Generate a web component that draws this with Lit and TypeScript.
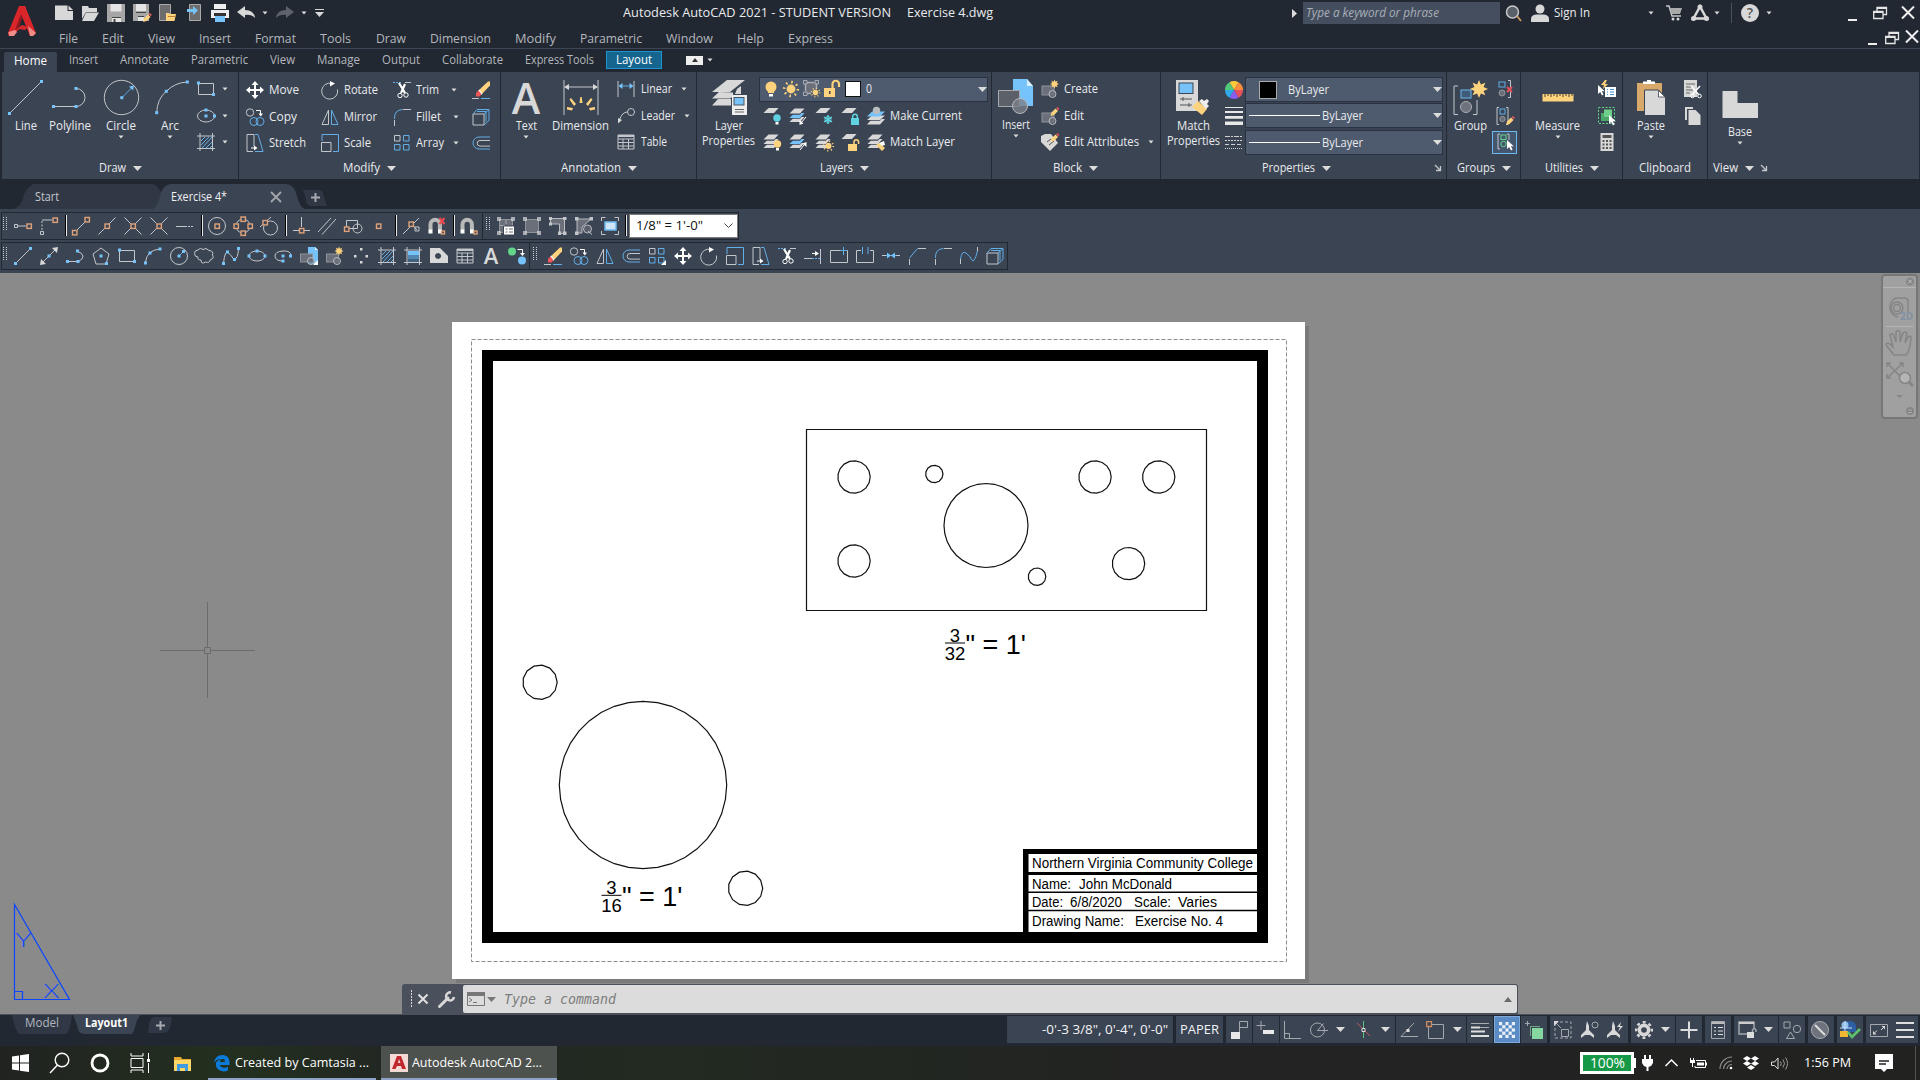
import { LitElement, html, svg, css, nothing } from "lit";
import { customElement, property } from "lit/decorators.js";

/** Text squeezed or stretched horizontally to a known advance width. */
@customElement("fit-text")
class FitText extends LitElement {
  @property({ type: Number }) w = 0;
  @property() label = "";
  static styles = css`
    :host { display: block; white-space: pre; line-height: 16px; }
    span { display: inline-block; transform-origin: 0 50%; }
  `;
  updated() {
    const s = this.renderRoot.querySelector("span") as HTMLElement;
    s.style.transform = "none";
    const n = s.getBoundingClientRect().width;
    if (n > 0) s.style.transform = `scaleX(${this.w / n})`;
    this.style.width = `${this.w}px`;
  }
  render() { return html`<span>${this.label}</span>`; }
}

type Cell = [number, number, unknown];

const sq = (x: number, y: number, s = 3) => svg`<rect class="bf" x=${x - s / 2} y=${y - s / 2} width=${s} height=${s} />`;
const osq = (x: number, y: number) => svg`<rect class="o" x=${x - 2} y=${y - 2} width="4.4" height="4.4" />`;
const sheet = (y: number, c = "gf") => svg`<path class=${c} d="M5.5 ${y}H15.5L11 ${y + 5}H.5Z" />`;
const stack = (mid = "gf") => svg`${sheet(10, "gf")}<path class="bg" d="M6 6H16L11 11.8H0Z" />${sheet(6, mid)}<path class="bg" d="M6 2H16L11 7.8H0Z" />${sheet(1.5)}`;
const pencil = (x: number, y: number) => svg`<path class="y" d="M${x} ${y + 8}l1-3.5 4-4 2.5 2.5-4 4z"/><path class="r" d="M${x + 5.6} ${y}l1.4-1 1.8 1.8-1 1.4z"/>`;
const cursor = (x: number, y: number) => svg`<path fill="#fff" d="M${x} ${y}v9l2.2-2 1.8 3.4 1.6-.8-1.7-3.3h2.9z"/>`;
const star = (cx: number, cy: number, r: number, n = 8) => {
  let p = "";
  for (let i = 0; i < n * 2; i++) {
    const a = (i * Math.PI) / n - Math.PI / 2, q = i % 2 ? r * 0.55 : r;
    p += `${(cx + q * Math.cos(a)).toFixed(2)},${(cy + q * Math.sin(a)).toFixed(2)} `;
  }
  return svg`<polygon class="y" points=${p} />`;
};
const sun = (cx: number, cy: number, r: number) => svg`<circle class="y" cx=${cx} cy=${cy} r=${r * 0.55} /><circle cx=${cx} cy=${cy} r=${r * 0.86} fill="none" stroke="#ffd37d" stroke-width=${r * 0.32} stroke-dasharray="${r * 0.2} ${r * 0.475}" />`;
const gear = svg`<circle cx="9" cy="9" r="4.6" fill="none" stroke="#d8d8d8" stroke-width="3.6"/><circle cx="9" cy="9" r="7.8" fill="none" stroke="#d8d8d8" stroke-width="2.4" stroke-dasharray="3 3.12" stroke-dashoffset="1.5"/>`;
const magnet = svg`<path d="M3.5 13V7.5a4.7 4.7 0 0 1 9.4 0V13" fill="none" stroke="#b9b9b9" stroke-width="4"/><path d="M1.5 12.5h4v4h-4zM11 12.5h4v4h-4z" fill="#fff"/>`;
const scissors = svg`<path class="b" stroke-dasharray="2 1" d="M0 1.5h8"/><path class="g" d="M12 1.5h6"/><path d="M6 2l6 10M12 3L8 12" stroke="#fff" stroke-width="2.2"/><circle cx="7" cy="14.5" r="2.2" class="w"/><circle cx="13" cy="14" r="2.2" class="w"/>`;
const cubeI = svg`<path class="g" d="M1 6h11v11H1z"/><path class="b" d="M1 6l4-4.500h12v11l-5 4.500M12 6l5-4.500M5 3.500h9v10"/>`;
const offsetI = svg`<path class="b" d="M18 3H7a6 6 0 0 0 0 12h11"/><path class="g" d="M18 6.500H8a2.800 2.800 0 0 0 0 5.600h10"/>`;
const eraser = svg`<path class="y" d="M6 10L16 .5h2v4L9 14z"/><path fill="#f2f2f2" d="M6 10l3 4 1.500-1.500-3-4z"/><path class="r" d="M4 12l2.500-2.500 3 3.700L7.500 15.500 4 15.500z"/><path class="g" d="M0 17.500h7"/><path class="b" d="M9 17.500h9"/>`;
const docI = (x: number, y: number, w: number, h: number, c = "gf") => svg`<path class=${c} d="M${x} ${y}h${w - 5}l5 5v${h - 5}h${-w}z"/>`;
const frame = svg`<path class="dg" d="M2.500 2.500h13v13h-13z"/><path class="gf" d="M0 0h4v4H0zM14 0h4v4h-4zM0 14h4v4H0zM14 14h4v4h-4z" opacity=".7"/>`;
const hatchI = (inner: unknown) => svg`${inner}<path class="g" d="M0 3h18M0 15.500h18M3 0v18M15.500 0v18"/>`;
const copyI = svg`<circle class="g" cx="4" cy="4.500" r="3.700"/><path class="w" d="M10 2.500h4.500v4"/><path fill="#fff" d="M12.500 5.500h4.500l-2.200 3z"/><circle class="b" cx="8" cy="13.500" r="4"/><circle class="b" cx="14" cy="13.500" r="4"/>`;
const blockI = svg`<rect class="dg" x="1" y="6" width="12" height="9"/><circle class="dg2" cx="11.500" cy="14" r="3.500"/>`;
const A_logo = svg`<path fill="#8e1a1f" d="M14.500 0l4 1L10 24 1 30 0 27z"/><path fill="#d9262b" d="M11 0h6l11 27-3 3h-3L13 8 7 24l7-5 6 2-3 3-6-1-6 7H1l-1-3z"/><path fill="#ef8d86" d="M7 24l2 2-3 4H1l-.500-4zM20 20l8 7-3 3h-3z"/>`;

const I: Record<string, unknown> = {
  line: svg`<path class="g" d="M1.500 33.500L33.500 1.500"/>${sq(1.5, 33.5)}${sq(33.5, 1.5)}`,
  polyline: svg`<path class="g" d="M2 26.500h22a9 9 0 0 0 0-18"/>${sq(1.500, 26.500)}${sq(24, 26.500)}${sq(24, 8.500)}`,
  circle: svg`<circle class="g" cx="18.500" cy="17.500" r="17.200"/><path class="b" d="M18.500 18L28.500 8"/><path class="bf" d="M31 5.500l-1 5-4-4z"/>${sq(18.800, 17.700)}`,
  arc: svg`<path class="g" d="M4.700 33Q5 19 14.300 11.300Q23 2.500 35.300 2"/>${sq(4.700, 32.700)}${sq(14.300, 11.300)}${sq(35.300, 2)}`,
  rect: svg`<path class="g" d="M1.500 3.500h15v11h-15z"/>${sq(1.500, 3)}${sq(16.500, 14.500)}`,
  ellipse: svg`<ellipse class="g" cx="9" cy="9" rx="8.500" ry="6"/>${sq(9, 3)}${sq(9, 9)}${sq(17.500, 9)}`,
  ellipse2: svg`<ellipse class="g" cx="9" cy="9" rx="8" ry="5"/>${sq(9, 4)}${sq(1, 9)}${sq(17, 9)}`,
  ellarc: svg`<path class="g" d="M8 14Q1 13.500 1 9T9 4t8 5"/>${sq(9, 9)}${sq(9, 14)}${sq(16.500, 9)}`,
  hatch: hatchI(svg`<path class="b" d="M4 8l4-4M4 12l8-8M5 15L15 4M9 15l6-6M13 15l2-2"/>`),
  gradient: hatchI(svg`<path class="bf" d="M4 4h11v4H4z"/><path fill="#5387b0" d="M4 8h11v4H4z"/><path fill="#42617e" d="M4 12h11v3H4z"/>`),
  move: svg`<path d="M9 2v14M2 9h14" stroke="#fff" stroke-width="2"/><path fill="#fff" d="M9 0l3.500 4h-7zM9 18l3.500-4h-7zM0 9l4-3.500v7zM18 9l-4-3.500v7z"/>`,
  rotate: svg`<path class="g" d="M11 2.500A8 8 0 1 0 16.500 8.500"/><path fill="#fff" d="M9 0l5 2.500-5 3z"/>`,
  trim: scissors, copy: copyI, eraser, cube: cubeI, offset: offsetI,
  mirror: svg`<path class="g" d="M7.500 2v14.500H1z"/><path class="b" d="M10.500 2v14.500H17z"/>`,
  fillet: svg`<path class="g" d="M10 1.500h8M1.500 12v6"/><path class="b" d="M1.500 11Q1 2 9.500 1.500"/>`,
  chamfer: svg`<path class="g" d="M10 1.500h8M1.500 12v6"/><path class="b" d="M1.500 11l8-9.500"/>`,
  stretch: svg`<path class="g" d="M7 17.500H1V.500h7v12"/><path class="b" d="M9 .5h3l5 17H9"/><path class="w" d="M5 14h4"/><path fill="#fff" d="M8 11.500l3.500 2.500-3.500 2.500z"/>`,
  scale: svg`<path class="b" d="M1 7V.500h16.500v17H12"/><path class="g" d="M.5 8.500h9.500v9H.500z"/>`,
  array: svg`<path class="g" d="M1.500 1.500h5.500v5.500H1.500z"/><path class="b" d="M10.500 1.500H16v5.500h-5.500zM1.500 10.500H7V16H1.500zM10.500 10.500H16V16h-5.500z"/>`,
  array2: svg`<path class="g" d="M1.500 1.500h5.500v5.500H1.500z"/><path class="b" d="M10.500 1.500H16v5.500h-5.500zM1.500 10.500H7V16H1.500zM10.500 10.500H16V16h-5.500z"/><path fill="#fff" d="M18 13v5h-5z"/>`,
  bigA: svg`<text x="18" y="33.500" text-anchor="middle" font-family="Open Sans" font-weight="600" font-size="43" fill="#d8d8d8">A</text>`,
  smA: svg`<text x="9" y="17" text-anchor="middle" font-family="Open Sans" font-weight="600" font-size="22" fill="#d8d8d8">A</text>`,
  dimension: svg`<path class="g" d="M1 0v35M35 0v35M3 7h30"/><path class="gf" d="M1 7l5-3v6zM35 7l-5-3v6z"/><g class="y"><path d="M16.500 23h3l-.800-6h-1.400zM13 24l-5-6-1.500 1.500L11 26zM23 24l5-6 1.500 1.500L25 26zM10 28l-6-1v2.500l5 1zM26 28l6-1v2.500l-5 1z"/></g>`,
  linear: svg`<path class="g" d="M1 1v16M17 1v16"/><path class="b" d="M3 6h12"/><path class="bf" d="M1.500 6l4-3v6zM16.500 6l-4-3v6z"/>`,
  leader: svg`<circle class="g" cx="14" cy="5" r="3.500"/><path class="g" d="M10.500 5Q5 5 2.500 13"/><path class="gf" d="M1 16.500V11l4 2z"/>`,
  table: svg`<path class="g" d="M1 2h16v14H1zM1 6h16M1 9.500h16M1 13h16M6 6v10M11.500 6v10"/><path class="g" stroke-width="2" d="M1 3h16"/>`,
  layers: svg`<path class="gf" d="M16 0h18L19 12H1z"/><path class="gf" d="M8 12L1 18.500h18l3-2v-4zM7 19l-6 6.500h19V19z"/><path class="gf" d="M26 9l4-3v8h-6z"/><rect x="21" y="15" width="15" height="20" fill="#eee"/><rect x="23" y="17.500" width="10" height="7.500" class="bf" stroke="#4a5260"/><path d="M24 29.500h9M24 32h9" stroke="#666"/>`,
  bulb: svg`<circle class="y" cx="9" cy="7" r="5.500"/><path class="y" d="M6 9h6v4H6z"/><path fill="#fff" d="M7 14h4v2.500H7z"/>`,
  sun: sun(9, 9, 8),
  vpfreeze: svg`<path fill="#6a6f7a" d="M2 2h12v11H2z"/><path fill="none" stroke="#a9adb3" stroke-width="1.500" d="M4 2.500h7M2.500 4v7M13.500 4v5M4 13.500h4"/><path fill="none" stroke="#a9adb3" d="M.500.500h3.500v3.500H.500zM12 .5h3.500v3.500H12zM.500 12h3.500v3.500H.500z"/>${sun(12.500, 12.500, 4.800)}`,
  unlock: svg`<path class="y" d="M1 8h11v9H1z"/><path fill="none" stroke="#ffd37d" stroke-width="2.200" d="M9.500 8V4a3 3 0 0 1 6.500 0v3"/><path fill="#3b4453" d="M6 11h1.500v3H6z"/>`,
  lyOff: svg`${sheet(1)}<circle cx="14" cy="11" r="3.700" fill="#5fd3e0"/><path fill="#fff" d="M12.500 15h3v2.500h-3z"/>`,
  lyIso: svg`${stack("bf")}<path class="w" d="M17 10l-5 6"/><path fill="#fff" d="M10.500 18v-5l4 3.500z"/>`,
  lyFrz: svg`${sheet(1)}<path stroke="#5fd3e0" stroke-width="1.500" d="M13 8v9M9 10.200l8 4.600M17 10.200l-8 4.600"/><circle cx="13" cy="12.500" r="3" fill="none" stroke="#5fd3e0"/>`,
  lyLock: svg`${sheet(1)}<path fill="#5fd3e0" d="M10 11h8v7h-8z"/><path fill="none" stroke="#5fd3e0" stroke-width="1.500" d="M11.700 11V9.500a2.300 2.300 0 0 1 4.600 0V11"/>`,
  lyCur: svg`<path class="gf" d="M5 12h13l-5 5.500H0z"/><path class="bg" d="M5 8h13l-5 5.800H0z"/><path class="gf" d="M5 8.500h13l-5 4.500H0z"/><path class="bf" d="M5 4.500h13l-5 5H0z"/><circle cx="9.500" cy="3.500" r="3.700" fill="#b9bcc0"/>`,
  lyOn: svg`${stack()}<circle class="y" cx="14.500" cy="11" r="3.700"/><path fill="#fff" d="M13 15h3v2.500h-3z"/>`,
  lyUniso: svg`${stack("bf")}<path class="w" d="M11 17l4-5"/><path fill="#fff" d="M17.500 9v5l-4-3.500z"/>`,
  lyThaw: svg`${stack()}${sun(13.500, 13, 5.500)}`,
  lyUnlock: svg`${sheet(1)}<path class="y" d="M7 11h9v7H7z"/><path fill="none" stroke="#ffd37d" stroke-width="1.500" d="M13 11V9a2.300 2.300 0 0 1 4.600 0v2"/>`,
  lyMatch: svg`${stack()}<path class="y" d="M9 12l3-2 6 5-3 3z"/><path fill="#fff" d="M12 10l5-2 1 4-3 1z"/>`,
  insert: svg`<path class="bf" d="M15 0h14l6 7v20H15z"/><path fill="#d8eeff" d="M29 0v7h6z"/><path fill="#5c6069" stroke="#a6a9ae" d="M.5 11.500h21v16H.500z"/><circle fill="#7c818a" fill-opacity=".8" stroke="#b5b8bd" cx="22" cy="27" r="7.500"/>`,
  create: svg`${blockI}${star(13.500, 4, 4.500)}`,
  edit: svg`${blockI}${pencil(9.500, 1)}`,
  attrs: svg`<path class="gf" d="M0 3l4-2h6l7 9-8 8L0 9z"/><path stroke="#555" d="M6 9l4-3M8 12l5-4" />${pencil(9.500, 1)}`,
  match: svg`<path class="gf" d="M1 0h22v31H1z"/><rect x="4" y="3" width="14" height="10.500" class="bf" stroke="#3b4453"/><path stroke="#555" d="M5 19h12M5 25h12M8 17v4M14 23v4"/><path class="y" d="M17 27l6-6 9 8-5 6z"/><path fill="#eee" d="M24 21l3-2 2 2 3-2 2 2-2 3 2 2-3 3z"/>`,
  wheel: svg`<path fill="#ffc93c" d="M9 9L4.500 1.200a9 9 0 0 1 9 0z"/><path fill="#ff8b3d" d="M9 9l4.500-7.800A9 9 0 0 1 18 9z"/><path fill="#e8515b" d="M9 9h9a9 9 0 0 1-4.500 7.800z"/><path fill="#8a5cf0" d="M9 9l4.500 7.800a9 9 0 0 1-9 0z"/><path fill="#2fa9e8" d="M9 9l-4.500 7.800A9 9 0 0 1 0 9z"/><path fill="#4fc878" d="M9 9H0a9 9 0 0 1 4.500-7.800z"/>`,
  weights: svg`<path fill="#e8e8e8" d="M0 0h18v1H0zM0 4h18v2H0zM0 9h18v2.800H0zM0 14.500h18v3.500H0z"/>`,
  ltypes: svg`<path stroke="#d0d0d0" stroke-dasharray="5 1 2 1" d="M0 2.500h18"/><path stroke="#d0d0d0" stroke-dasharray="2 1" d="M0 6.500h18"/><path stroke="#d0d0d0" stroke-dasharray="4 2" d="M0 10.500h18"/><path stroke="#d0d0d0" stroke-dasharray="1 1" d="M0 14.500h18"/>`,
  group: svg`<path class="g" d="M5 6H1v28.500h4M20 34.500h4V20"/><rect x="8" y="10" width="10" height="8" fill="#3f5b75" stroke="#6cb8f0"/><circle cx="13" cy="27" r="5.500" fill="#6d727d" stroke="#a9adb3"/>${star(26, 9, 9)}`,
  ungroup: svg`<rect x="3" y="2" width="6" height="5" class="b"/><circle cx="6" cy="13" r="3" class="dg"/><path class="g" d="M12 .5h2.500v17H12"/><path stroke="#e8515b" stroke-width="2" d="M11 7l5 5M16 7l-5 5"/>`,
  groupedit: svg`<path class="g" d="M3 .5H1v17h2M10 .5h2v17h-2"/><rect x="4" y="2" width="5" height="5" class="b"/><circle cx="6.500" cy="12" r="2.700" class="dg"/>${pencil(10, 10)}`,
  groupsel: svg`<path class="g" d="M4 1H2v15h2M11 1h2v6"/><rect x="5" y="2" width="5" height="4.500" class="gr"/><circle cx="7.500" cy="11" r="2.700" class="gr"/>${cursor(11, 7)}`,
  measure: svg`<path class="y" d="M2.500 14h31v7.500h-31z"/><path stroke="#4a4030" d="M5 14v3M8 14v2M11 14v3M14 14v2M17 14v3M20 14v2M23 14v3M26 14v2M29 14v3M32 14v2"/>`,
  qselect: svg`<path class="y" d="M7 0l-4 5h3l-1 4 5-5H7l2-4z"/><path fill="#fff" d="M7 7h11v10H7z"/><path stroke="#3c8fd0" d="M9 9.500h1M12 9.500h4M9 12h1M12 12h4M9 14.500h1M12 14.500h4"/>${cursor(0, 5)}`,
  selall: svg`<path class="gr" stroke-dasharray="2 1.500" d="M.500 .5h16v16H.500z"/><path fill="#6fd08a" d="M6 2.500h8v8H6z"/><path fill="#4aa868" d="M3 6h3v4.500h5V14H3z"/>${cursor(11, 8)}`,
  calc: svg`<path class="gf" d="M2.500 0h13v18h-13z"/><path fill="#555" d="M4.500 2h9v3h-9zM4.500 7h2v2h-2zM8 7h2v2H8zM11.500 7h2v2h-2zM4.500 10.500h2v2h-2zM8 10.500h2v2H8zM11.500 10.500h2v2h-2zM4.500 14h2v2h-2zM8 14h2v2H8zM11.500 14h2v2h-2z"/>`,
  paste: svg`<path fill="#d9a96c" d="M4 3h25v28H4z"/><path fill="#fff" d="M10 4V1.500h4V0h4v1.500h4V4z"/><path class="gf" stroke="#3b4453" d="M11.500 10h14l7 7v18.500h-21z"/><path fill="#fff" stroke="#3b4453" stroke-width=".8" d="M25.500 10.500V17h6.500z"/>`,
  cut: svg`<path class="gf" d="M1 0h13v17H1z"/><path stroke="#666" d="M3 4h9M3 7h6M3 10h7M3 13h4"/><path d="M8 6l8 9M17 6l-8 9" stroke="#fff" stroke-width="1.500"/><circle cx="9.500" cy="16" r="1.800" class="w"/><circle cx="16.500" cy="16" r="1.800" class="w"/>`,
  copyclip: svg`<path class="gf" d="M2 0h8v2H4v11H2z"/>${docI(5.500, 3, 12, 15)}`,
  base: svg`<path class="gf" d="M.5 9h15v12H36v15H.500z"/>`,
  // object snap bar
  tt: svg`<path class="g" d="M.500 7.500h3v3h-3zM4 9h8"/>${osq(15, 9)}`,
  from: svg`<path class="g" d="M2 3h10M.500 14.500h3v3h-3z"/><path class="g" stroke-dasharray="2 1.500" d="M2 4v9"/>${osq(15, 3)}`,
  end: svg`<path class="g" d="M3 15L15 3"/>${osq(2.500, 15.500)}${osq(15, 2.500)}`,
  mid: svg`<path class="g" d="M.500 17.500l17-17"/>${osq(9, 9)}`,
  int: svg`<path class="g" d="M.500 17.500l17-17M.500.500l17 17"/>${osq(9, 9)}`,
  app: svg`<path class="g" d="M.500 17.500l17-17"/><path class="g" d="M.500.500l6 6m5 5l6 6"/>${osq(9, 9)}`,
  ext: svg`<path class="g" d="M0 9.500h11"/><path class="g" stroke-dasharray="2 1" d="M12 9.500h6"/>`,
  cen: svg`<circle class="g" cx="9" cy="9" r="8.500"/>${osq(9, 9)}`,
  qua: svg`<circle class="g" cx="9" cy="9" r="7"/>${osq(9, 2)}${osq(2, 9)}${osq(16, 9)}${osq(9, 16)}`,
  tan: svg`<circle class="g" cx="10.500" cy="11" r="7"/><path class="g" d="M0 10L11 0"/>${osq(5, 5.500)}`,
  per: svg`<path class="g" d="M8.500 0v10M0 13.500h17"/>${osq(8.500, 13.500)}`,
  par: svg`<path class="g" d="M0 15L13 1M4 17.500L18 2"/>`,
  ins: svg`<path class="g" d="M2.500 10V3.500h11v8H5"/><circle class="g" cx="13.500" cy="11.500" r="4.500"/>${osq(2.500, 12)}`,
  nod: osq(8.500, 9),
  nea: svg`<path class="g" d="M0 17L16 1M9 7l5 6M12 10h4v4h-4z"/>${osq(8, 7)}`,
  non: svg`${magnet}<path stroke="#f04a50" stroke-width="2" d="M12.500 1l5 6M17.500 1l-5 6"/><rect class="o" x="14.500" y="14" width="3" height="3"/>`,
  osn: svg`${magnet}<rect class="o" x="15" y="14" width="3" height="3"/>`,
  vpd: svg`${frame}<path fill="none" stroke="#a4a7ad" d="M9 3v4M3 8.500h5"/><path fill="#fff" stroke="#3b4453" d="M6.500 9h11v9h-11z"/><path stroke="#666" d="M8.500 12h2M12 12h4M8.500 15h2M12 15h4"/>`,
  vps: frame,
  vpp: svg`<path fill="#6a6f7a" stroke="#b8bbc0" d="M1.500 1.500h14v15h-5V7h-9z"/><path fill="#c4c6ca" d="M0 0h3v3H0zM14 0h3.500v3H14zM14 14.500h3.500V18H14zM9 14.500h3V18H9zM0 5.500h3v3H0z"/>`,
  vpo: svg`<path fill="#6a6f7a" stroke="#b8bbc0" d="M2 2h14l-9 8v6H2z"/><path fill="#c4c6ca" d="M0 0h3.500v3.500H0zM14.500 0H18v3.500h-3.500zM0 14.500h3.500V18H0z"/><circle class="dg2" cx="12.500" cy="12" r="4"/><path class="g" d="M13 14l4 3.500"/>`,
  vpc: svg`<path class="g" d="M0.500 4V.500h4M13.500.500h4V4M.500 14v3.500h4M13.500 17.500h4V14"/><path fill="#cfe6f8" stroke="#6cb8f0" stroke-width="1.500" d="M4 5h11v8H4z"/>`,
  // draw bar
  sline: svg`<path class="g" d="M2 16L16 2"/>${sq(1.500, 16.500)}${sq(16.500, 1.500)}`,
  xline: svg`<path class="g" d="M2 16L16 2"/><path class="gf" d="M0 18l1-6 5 5zM18 0l-1 6-5-5z"/>${sq(9, 9)}`,
  spline0: svg`<path class="g" d="M2 14.500h10M13 14Q17.500 12 17 9T11 4"/>${sq(1.500, 14.500)}${sq(12, 14.500)}${sq(11.500, 4)}`,
  polygon: svg`<path class="g" d="M9 1l8 6-3 10H4L1 7z"/>${sq(9, 9)}${sq(14.500, 16.500)}`,
  sarc: svg`<path class="g" d="M1.500 15Q3 3 16 2"/>${sq(1.500, 16)}${sq(6, 6)}${sq(16, 2)}`,
  scircle: svg`<circle class="g" cx="9" cy="9" r="8.500"/><path class="b" d="M9 9l4-4"/>${sq(9, 9)}${sq(13.500, 4.500)}`,
  cloud: svg`<path class="g" d="M2 10A3.500 3.500 0 0 1 2 3Q4 0 7 2.500 10 0 13 3.500 18 4 16.500 8q2 4-2 4.500-1 4-5 2.500Q5 18 5 13 1 13 2 10z"/>`,
  spline: svg`<path class="g" d="M1.500 16Q3 3 6 5.500T12 12.500Q16 12 16.500 2"/>${sq(1.500, 16.500)}${sq(5.500, 5)}${sq(12.500, 12.500)}${sq(16.500, 1.500)}`,
  sinsert: svg`<path class="bf" d="M8 0h7l3 3v14H8z"/><path fill="#d8eeff" d="M15 0v3h3z"/><rect class="dg" x="0.500" y="7" width="12" height="8"/><circle class="dg2" cx="11" cy="14" r="3.500"/><path fill="#fff" d="M18 13v5h-5z"/>`,
  smake: svg`<rect class="dg" x="0.500" y="7" width="12" height="8"/><circle class="dg2" cx="11" cy="14" r="3.500"/>${star(13, 4, 4.500)}`,
  point: svg`<path class="gf" d="M8 1h2.500v2.500H8zM2 8h2.500v2.500H2zM13.500 8H16v2.500h-2.500zM8 14h2.500v2.500H8z"/>`,
  region: svg`<path class="gf" fill-rule="evenodd" d="M0 1h10l8 8v7H0zM8 6a3 3 0 1 0 .1 0z"/>`,
  addsel: svg`<circle cx="4" cy="4.500" r="4" fill="#62d688"/><circle cx="14" cy="13.500" r="4" class="bf"/><path class="w" d="M9.500 2.500h5v4"/><path fill="#fff" d="M12 6h5l-2.500 3z"/>`,
  extend: svg`<path class="g" d="M0 11.500h8M16.500 2v15"/><path class="b" stroke-dasharray="2 1" d="M8 11.500h8"/><path class="w" d="M8 6.500h4"/><path fill="#fff" d="M11 4l4 2.500-4 2.500z"/>`,
  brkpt: svg`<path class="g" d="M10 3.500H.500v12h17v-12H16"/><path class="b" d="M13.500 0v8M10 3.500h7"/>`,
  brk: svg`<path class="g" d="M5 3.500H.500v12h17v-12H14"/><path class="b" d="M6.500 0v7M12 0v7"/>`,
  join: svg`<path class="g" d="M0 8.500h4M14 8.500h4"/><path class="b" d="M4 8.500h10"/><path class="bf" d="M9 8.500L5 5.500v6zM9 8.500l4-3v6z"/>`,
  blend: svg`<path class="g" d="M.500 17V12M17.500 0v4"/><path class="b" d="M.500 12Q2 3 6 6t6 7 5.500-9"/>`,
  // quick access
  newf: svg`<path class="gf" d="M0 1.500h12.500V7H18v9H0z"/><path class="gf" d="M13.500 1.500L18 6h-4.500z"/>`,
  open: svg`<path class="gf" d="M1 2h6l1 2h8v4H5L1 15zM5 8.500h13L13 17H1z"/>`,
  save: svg`<path fill="#a6a6a6" d="M0 0h18v18H0z"/><path fill="#e4e4e4" d="M3.500 0h11v7.500h-11zM5 13h9v5H5z"/><path fill="#444" d="M5 13h9v1H5zM6.500 15h2v3h-2z"/>`,
  saveas: svg`<path fill="#a6a6a6" d="M0 0h16v17H0z"/><path fill="#e4e4e4" d="M3 0h10v7H3zM5 12h6v5H5z"/><path fill="#444" d="M3 8h10v1H3zM5 12h6v1H5z"/>${pencil(10, 10)}`,
  mobo: svg`<path fill="#6d6d6d" stroke="#aaa" d="M.500.500h11v16H.500z"/><path class="y" d="M7 9h3l1 1h6l-1.500 7H7z"/><path fill="#b58430" d="M9 12h8l-1 1H9z"/>`,
  mobs: svg`<path fill="#6d6d6d" stroke="#aaa" d="M4.500.500h11v16h-11z"/><path class="bf" d="M2 5h6V2l5 4.500L8 11V8H2z"/>`,
  print: svg`<path fill="#eee" d="M3 0h12v5H3zM0 6h18v8H0z"/><path fill="#333" d="M3 9h12v3H3z"/><path class="bf" d="M4 12h10v6H4z"/>`,
  undo: svg`<path fill="#d8d8d8" d="M0 8l8-6v4q9 0 10 8-4-4-10-3v3z"/>`,
  redo: svg`<path fill="#5d626b" d="M18 8l-8-6v4Q1 6 0 14q4-4 10-3v3z"/>`,
  qcust: svg`<path stroke="#d8d8d8" d="M0 2.500h9"/><path class="gf" d="M0 5h9L4.500 10z"/>`,
  search: svg`<circle cx="7.500" cy="8" r="6" fill="#5a6068" stroke="#c8c8c8" stroke-width="1.500"/><path stroke="#c89a60" stroke-width="2" d="M12 12l4 5"/>`,
  user: svg`<circle class="gf" cx="9" cy="5" r="4.500"/><path class="gf" d="M0 18v-3q0-4 5-4.500h8q5 .500 5 4.500v3z"/>`,
  cart: svg`<path class="g" stroke-width="1.500" d="M0 2h3l3 10h9"/><path fill="#aaa" d="M4 4h12l-2 6H6z"/><circle class="gf" cx="7" cy="15" r="1.500"/><circle class="gf" cx="12" cy="15" r="1.500"/>`,
  adapp: svg`<path fill="none" stroke="#d8d8d8" stroke-width="2.500" d="M9 2.500L2.500 14.500h13z"/><circle class="gf" cx="9" cy="3" r="2.500"/><circle class="gf" cx="2.500" cy="14.500" r="2.500"/><circle class="gf" cx="15.500" cy="14.500" r="2.500"/>`,
  help: svg`<circle class="gf" cx="9" cy="9" r="9"/><text x="9" y="14" text-anchor="middle" font-family="Open Sans" font-weight="600" font-size="14" fill="#555">?</text>`,
  min: svg`<path fill="#eee" d="M2 12h9v2H2z"/>`,
  restore: svg`<path fill="none" stroke="#e6e6e6" stroke-width="1.300" d="M4 6V1.500h9.500v7H10M.700 5.500H10v7H.700z"/><path stroke="#e6e6e6" stroke-width="2" d="M4 2h9.500M.500 6H10"/>`,
  close: svg`<path stroke="#eee" stroke-width="2" d="M1 .5l12 12M13 .5L1 12.500"/>`,
  // status bar
  s1: svg`<path fill="#e8e8e8" d="M1 11h9v7H1z"/><path class="g2" d="M9.500 11V.500h8v6h-8"/>`,
  s2: svg`<path class="g2" d="M5 0v9M.500 4.500h9"/><path fill="#e8e8e8" d="M7 9h11v4H7z"/>`,
  s3: svg`<path class="g2" d="M1.500 0v17.500H18M1.500 12.500h5v5"/>`,
  s4: svg`<circle class="g2" cx="7.500" cy="9" r="7"/><path class="g2" d="M7.500 9.500H18M7.500 9.500l6-7"/>`,
  s5: svg`<path stroke="#c0575e" d="M3 2l13 13"/><path stroke="#5cc07e" d="M9.500 0v17"/><path fill="#3b4453" stroke="#ddd" d="M8 7.500h3v3H8z"/>`,
  s6: svg`<path class="g2" d="M14 2L1 15.500h17"/><path fill="#ddd" d="M6.500 8h3v3h-3z"/>`,
  s7: svg`<path class="g2" d="M2.500 3.500h15v14h-15z"/><path fill="#3b4453" stroke="#d08a5e" stroke-width="1.300" d="M.700.700h4.800v4.800H.700z"/>`,
  s8: svg`<path stroke="#a9adb3" d="M0 2.500h18M8 6.500h10"/><path stroke="#ddd" stroke-width="2" d="M0 6.500h9M0 10.500h14M0 15h18"/>`,
  s9: svg`<path fill="#e9f0f8" d="M1 1h16v16H1z"/><g fill="#5b8bc4">${[0, 1, 2, 3, 4].map((r) => [0, 1, 2, 3, 4].map((c) => (r + c) % 2 ? svg`<rect x=${1 + c * 3.2} y=${1 + r * 3.2} width="3.2" height="3.2"/>` : nothing))}</g>`,
  s10: svg`<path fill="#84d8a0" d="M7 7h11v11H7z"/><path fill="none" stroke="#6fa884" d="M5.500 15V5.500H15"/><path class="g2" d="M2.500 0v5M0 2.500h5"/>`,
  s11: svg`<path class="g2" stroke-dasharray="3 2" d="M1 1h16v16H1z"/><path class="g2" d="M7.500 8.500h7v7h-7zM1 1l6 6"/><path class="gf" d="M0 0h5L0 5z"/>`,
  s12: svg`<path class="gf" d="M6 0l2 5v4l5 5v3l-4-3H4l-4 3v-3l5-5V5z"/><circle class="g2" cx="14" cy="4" r="3"/>`,
  s13: svg`<path class="gf" d="M7 0l2 5v4l5 5v3l-4-3H5l-4 3v-3l5-5V5zM15 1l-4 5h3l-2 5 5-6h-3z"/>`,
  s14: gear,
  s15: svg`<path stroke="#ddd" stroke-width="2" d="M9 .5v17M.500 9h17"/>`,
  s16: svg`<path class="g2" d="M2.500.500h13v17h-13z"/><path stroke="#bbb" stroke-width="2" d="M3 2h12"/><path stroke="#ddd" d="M5 6.500h2M9 6.500h5M5 10h2M9 10h5M5 13.500h2M9 13.500h5"/>`,
  s17: svg`<path class="g2" stroke-width="1.500" d="M9 13H1V1h15v6"/><path stroke="#ccc" stroke-width="2" d="M1 2h15"/><path fill="#ddd" d="M9 11h7v6H9z"/><path class="g2" stroke-width="1.500" d="M14.500 11V9q2-3 3.500 0v2"/>`,
  s18: svg`<path class="g2" d="M1 1h6v6H1zM7.500 11l4 6.500h-8z"/><circle class="g2" cx="14" cy="8" r="3.700"/>`,
  s19: svg`<circle cx="9" cy="9" r="8.500" fill="#6d727d" stroke="#aaa"/><path stroke="#ddd" stroke-width="2" d="M4 4l10 10"/>`,
  s20: svg`<path fill="#2d5fa4" d="M3 1q12-3 13 4v6H2z"/><circle cx="5" cy="4" r="3.500" fill="#8fc0ee"/><path stroke="#cfe3f7" d="M0 7h12M5 0v11"/><path fill="#f2b632" d="M0 10h8v6H0z"/><path stroke="#5dc06c" stroke-width="2.800" fill="none" d="M8 11l4 5 8-8"/>`,
  s21: svg`<path class="g2" d="M.500 3.500h17v12H.500z"/><path stroke="#ddd" d="M4 12.500l3-3M14 6l-3 3"/><path class="gf" d="M3 10v3.500h3.500zM11.500 5H15v3.500z"/>`,
  s22: svg`<path stroke="#e0e0e0" stroke-width="2" d="M0 2h18M0 9h18M0 16h18"/>`,
  // taskbar
  win: svg`<path fill="#fff" d="M0 2.500L7 1.500v7H0zM8 1.300L17 0v8.500H8zM0 9.500h7v7l-7-1zM8 9.500h9V18l-9-1.300z"/>`,
  tsearch: svg`<circle cx="12" cy="7" r="6.800" class="w" stroke-width="1.400"/><path stroke="#fff" stroke-width="1.400" d="M7.500 12L0 20"/>`,
  cortana: svg`<circle cx="10" cy="10" r="8" fill="none" stroke="#fff" stroke-width="2.800"/>`,
  tview: svg`<path class="w" d="M1 0v3h12V0M1 20v-3h12v3M1 5.500h12v9H1zM18.500 0v6M18.500 10v10"/><path fill="#fff" d="M17 6h3v3h-3z"/>`,
  folder: svg`<path fill="#e8a92e" d="M0 2h7l1 2h9v3H0z"/><path fill="#ffd766" d="M0 5h17v11H0z"/><path fill="#3f9be0" d="M3 9h11v7h-3v-3H6v3H3z"/>`,
  edge: svg`<path fill="#0c7bd8" d="M0 8Q1 0 8.500 0 15 0 15.500 7v3H6q1 4 8 2v3.500Q9 17.500 5 15 1 12 2 7.500 3.500 5 7 4 2 4 0 8zM6 7h5q0-3-2.500-3T6 7z"/>`,
  acad: svg`<path fill="#f5d9d5" d="M0 0h18v18H0z"/><path fill="#c0272d" d="M7 2h4l5 13h-4l-1-3H7l-1.500 3H2zM8 9h2.500L9 5z"/>`,
  plug: svg`<path fill="#fff" d="M3 0h2v4H3zM8 0h2v4H8zM1 4h11v4q-1 3-4.500 4v4h-2v-4Q2 11 1 8z"/>`,
  chev: svg`<path class="w" stroke-width="1.500" d="M.500 8L6.500 2l6 6"/>`,
  batt: svg`<path class="w" d="M6 3.500h9.500v7H5V9M16.500 5.500v3"/><path fill="#fff" d="M0 1h1v2h2V1h1v2h1v3H3v4H2V6H0zM7 5.500h7v3H7z"/>`,
  wifi: svg`<path fill="none" stroke="#8a8a8a" stroke-width="1.200" d="M0 12A12 12 0 0 1 12 0M3.500 12A8.500 8.500 0 0 1 12 4M7 12a5 5 0 0 1 5-4.500"/><circle cx="11" cy="11" r="1.300" fill="#fff"/>`,
  dropbox: svg`<path fill="#fff" d="M4 0l4 2.500L4 5 0 2.500zM12 0l4 2.500L12 5 8 2.500zM4 5l4 2.500L4 10 0 7.500zM12 5l4 2.500L12 10 8 7.500zM8 9l4 2.500L8 14l-4-2.500z"/>`,
  vol: svg`<path fill="none" stroke="#ddd" d="M.500 5h3l3.500-4v11L3.500 8.500h-3z"/><path fill="none" stroke="#9a9a9a" d="M9.500 4.500q1.500 2.200 0 4.500M12 2.500q3 4.200 0 8M14.500.500q4 6 0 12"/>`,
  notif: svg`<path fill="#fff" d="M0 0h18v15h-6l-3 3-3-3H0z"/><path stroke="#222" stroke-width="1.300" d="M4 7h10M4 10h7"/>`,
};

const ic = (name: string, w = 18, h = w) =>
  html`<svg class="ic" width=${w} height=${h} viewBox="0 0 ${w} ${h}">${I[name]}</svg>`;
const caretS = html`<svg class="ic" width="6" height="4" viewBox="0 0 6 4"><path class="cr" d="M.500.500h5L3 3.500z"/></svg>`;
const caretL = html`<svg class="ic" width="9" height="5" viewBox="0 0 9 5"><path class="cr" d="M0 0h9L4.500 5z"/></svg>`;

const T = (x0: number, x1: number, label: string, cls = ""): Cell =>
  [x0, x1 - x0, html`<fit-text class=${cls} .w=${x1 - x0} .label=${label}></fit-text>`];
const N = (x: number, name: string, w = 18, h = w): Cell => [x, w, ic(name, w, h)];
const cs = (x: number): Cell => [x - 3, 6, caretS];
const cl = (x: number): Cell => [x - 4.5, 9, caretL];
const sep = (x: number): Cell => [x, 2, html`<div class="tsep"></div>`];
const grip = (x: number): Cell => [x, 4, html`<div class="grip"></div>`];

/** A flex row whose cells are spaced by the gap between one cell's end and the next one's start. */
const row = (x0: number, items: Cell[], cls = "") => {
  let end = x0;
  return html`<div class="row ${cls}">${items.map(([x, w, c]) => {
    const m = x - end;
    end = x + w;
    return html`<div class="cell" style="margin-left:${m}px;width:${w}px">${c}</div>`;
  })}</div>`;
};

const big = (c: number, icon: string, labels: [string, number][], caret = false, cls = ""): Cell => [
  c - 30, 60,
  html`<div class="big ${cls}">${ic(icon, 36)}
    ${labels.map(([l, w]) => html`<fit-text .w=${w} .label=${l}></fit-text>`)}
    ${caret ? html`<div class="bc">${caretS}</div>` : nothing}</div>`,
];
const col = (x0: number, x1: number, rows: Cell[][], cls = ""): Cell =>
  [x0, x1 - x0, html`<div class="col ${cls}">${rows.map((r) => row(x0, r, "r"))}</div>`];
const panel = (x0: number, x1: number, body: Cell[], title: Cell[]) =>
  html`<section class="panel" style="width:${x1 - x0}px">${row(x0, body, "body")}${row(x0, title, "ptitle")}</section>`;

const ngon = (cx: number, cy: number, r: number, n: number) => {
  const pts = Array.from({ length: n }, (_, i) => {
    const a = (i * 2 * Math.PI) / n;
    return `${(cx + r * Math.cos(a)).toFixed(1)},${(cy + r * Math.sin(a)).toFixed(1)}`;
  }).join(" ");
  return svg`<polygon class="ink" points=${pts} />`;
};
const dt = (x0: number, x1: number, y: number, s: string) =>
  svg`<text x=${x0} y=${y} textLength=${x1 - x0} lengthAdjust="spacingAndGlyphs" font-size="14">${s}</text>`;

const menus: [number, number, string][] = [[59, 78, "File"], [102, 124, "Edit"], [148, 175, "View"], [199, 231, "Insert"], [255, 296, "Format"], [320, 351, "Tools"], [376, 406, "Draw"], [430, 491, "Dimension"], [515, 556, "Modify"], [580, 642, "Parametric"], [666, 713, "Window"], [737, 764, "Help"], [788, 833, "Express"]];
const tabs: [number, number, string][] = [[69, 98, "Insert"], [120, 169, "Annotate"], [191, 248, "Parametric"], [270, 295, "View"], [317, 360, "Manage"], [382, 420, "Output"], [442, 503, "Collaborate"], [525, 594, "Express Tools"]];
const drawBar = ["sline", "xline", "spline0", "polygon", "rect", "sarc", "scircle", "cloud", "spline", "ellipse2", "ellarc", "sinsert", "smake", "point", "hatch", "gradient", "region", "table", "smA", "addsel"];
const modBar = ["eraser", "copy", "mirror", "offset", "array2", "move", "rotate", "scale", "stretch", "trim", "extend", "brkpt", "brk", "join", "chamfer", "fillet", "blend", "cube"];
const status: [number, number, Cell[], string?][] = [
  [1007, 1173, [T(1042, 1168, `-0'-3 3/8", 0'-4", 0'-0"`)]],
  [1176, 1223, [T(1180, 1219, "PAPER")]],
  [1226, 1252, [N(1230, "s1")]], [1253, 1279, [N(1256, "s2")]],
  [1280, 1395, [N(1283, "s3"), N(1310, "s4"), cl(1340), N(1354, "s5"), cl(1385.500)]],
  [1396, 1466, [N(1400, "s6"), N(1426, "s7"), cl(1457)]],
  [1467, 1493, [N(1471, "s8")]], [1494, 1520, [N(1498, "s9")], "on"], [1521, 1547, [N(1525, "s10")]],
  [1550, 1628, [N(1554, "s11"), N(1581, "s12"), N(1606, "s13")]],
  [1631, 1675, [N(1635, "s14"), cl(1665.500)]], [1676, 1702, [N(1680, "s15")]],
  [1705, 1731, [N(1709, "s16")]], [1734, 1778, [N(1738, "s17"), cl(1768.500)]],
  [1779, 1805, [N(1783, "s18")]], [1808, 1834, [N(1811, "s19")]], [1837, 1863, [N(1840, "s20")]],
  [1866, 1918, [N(1870, "s21"), N(1896, "s22")]],
];

@customElement("app-root")
class AppRoot extends LitElement {
  static styles = css`
    :host { display: flex; flex-direction: column; width: 1920px; height: 1080px; overflow: hidden; background: #222831; color: #e9ebee; font: 12px/16px "Open Sans", "Noto Sans", sans-serif; }
    .row { display: flex; align-items: center; }
    .cell { flex: none; display: flex; align-items: center; }
    .ic { display: block; flex: none; overflow: visible; }
    .g { fill: none; stroke: #c3c6ca; } .g2 { fill: none; stroke: #a4a8ae; }
    .b { fill: none; stroke: #62aee6; } .w { fill: none; stroke: #fff; }
    .gf { fill: #d8d8d8; } .bf { fill: #76c3fb; } .y { fill: #ffd37d; } .r { fill: #f0555a; } .bg { fill: #3b4453; }
    .o { fill: #3b4453; stroke: #dfa27a; stroke-width: 1.4; }
    .gr { fill: none; stroke: #62d688; }
    .dg { fill: #6a6f7a; stroke: #8f939a; } .dg2 { fill: #6a6f7a; fill-opacity: .6; stroke: #b8bbc0; }
    .cr { fill: #dcdcdc; }
    .top { display: flex; height: 48px; }
    .logo { width: 46px; padding: 6px 0 0 8px; box-sizing: border-box; height: 48px; }
    .tops { width: 1874px; }
    .title { height: 26px; font-size: 12.5px; }
    .menu { height: 24px; font-size: 13px; color: #b3b7bd; }
    .find { width: 197px; height: 22px; background: #454e5f; display: flex; align-items: center; padding-left: 3px; box-sizing: border-box; font-style: italic; color: #a9aeb8; }
    .vsep { width: 1px; height: 20px; background: #4b515c; }
    .tabs { border-top: 1px solid #3d4657; color: #b3b7bd; box-sizing: border-box; height: 24px; padding-bottom: 1px; }
    .tab { box-sizing: border-box; display: flex; align-items: center; }
    .home { width: 53px; height: 20px; background: #3b4453; padding: 0 0 2px 10px; color: #fff; margin-top: 3px; border-radius: 2px 2px 0 0; }
    .lay { width: 56px; height: 18px; background: #15658f; border: 1px solid #1f93cf; padding-left: 9px; color: #fff; }
    .rbtn { width: 17px; height: 9px; background: #eee; display: flex; align-items: center; justify-content: center; }
    .ribbon { display: flex; gap: 1px; padding: 0 1px 1px 2px; height: 107px; }
    .panel { background: #3b4453; }
    .body { height: 85px; padding-top: 1px; align-items: flex-start; }
    .body > .cell { align-items: flex-start; }
    .ptitle { height: 20px; }
    .col { padding-top: 4px; display: flex; flex-direction: column; }
    .r { height: 26.500px; }
    .up { margin-top: -1px; }
    .props { padding-top: 4px; gap: 1px; } .props .r { height: 25px; } .props .r + .r + .r { margin-top: 1px; }
    .big { width: 60px; display: flex; flex-direction: column; align-items: center; padding-top: 7px; }
    .big .ic + fit-text { margin-top: 2px; }
    .big fit-text + fit-text { margin-top: -1px; }
    .big .bc { margin-top: 1px; }
    .big.low { padding-top: 9px; } .big.low .ic + fit-text { margin-top: 6px; }
    .combo { box-sizing: border-box; background: #4e5a6d; border: 1px solid #2a3140; height: 25px; display: flex; align-items: center; }
    .sw { box-sizing: border-box; background: #fff; border: 1px solid #111; width: 16px; height: 16px; }
    .sw.k { background: #000; border-color: #aaa; width: 18px; height: 18px; }
    .ln { height: 1px; width: 71px; background: #fff; }
    .sel { box-sizing: border-box; width: 25px; height: 23px; border: 1px solid #6cb8f0; background: #44566d; display: flex; align-items: center; justify-content: center; }
    .docs { height: 29px; align-items: flex-end; color: #c5c8cd; }
    .docs > .cell { align-items: flex-end; }
    .doc { height: 25px; display: flex; align-items: center; box-sizing: border-box; background: #303846; }
    .d1 { width: 150px; padding-left: 22px; clip-path: path("M0 25Q8 23 10 14T20 0H138Q146 0 149 12L150 25Z"); }
    .d2 { width: 152px; padding-left: 18px; gap: 44px; background: #3b4453; color: #f0f1f3; clip-path: path("M0 25Q5 22 7 12T17 0H133Q141 0 144 12T152 25Z"); }
    .dp { width: 24px; height: 17px; margin-bottom: 3px; justify-content: center; clip-path: path("M0 1H16Q20 1 21 8L24 17H8Q3 17 3 10Z"); }
    .bars { height: 64px; background: #3b4453; padding: 3px 0 0 1px; box-sizing: border-box; display: flex; flex-direction: column; gap: 2px; }
    .bar { height: 28px; display: flex; }
    .tb { box-sizing: border-box; border: 1px solid #222831; height: 28px; margin-right: -1px; }
    .tb .row { height: 25px; }
    .tsep { width: 2px; height: 21px; background: linear-gradient(90deg, #000 50%, #e8e8e8 50%); }
    .grip { width: 4px; height: 15px; margin-bottom: 4px; background: repeating-linear-gradient(#3b4453 0 1px, transparent 1px 2px), repeating-linear-gradient(90deg, #c8cbd0 0 1px, transparent 1px 3px); }
    .vs { width: 109px; height: 24px; box-sizing: border-box; border: 1px solid #7a7a7a; background: #fff; color: #111; display: flex; align-items: center; padding-left: 6px; gap: 21px; font-size: 12.5px; }
    .canvas { position: relative; height: 741px; background: #8a8a8a; }
    .sheet { display: block; font-family: "Liberation Sans", Arial, sans-serif; }
    .ink { fill: none; stroke: #111; stroke-width: 1.2; }
    .nav { position: absolute; left: 1881px; top: 1px; width: 37px; height: 145px; box-sizing: border-box; border: 2px solid #777; border-radius: 4px; background: #a0a0a0; }
    .cmd { position: absolute; left: 402px; top: 711px; width: 1116px; height: 30px; background: #4a505c; display: flex; box-sizing: border-box; padding: 1px 1px 1px 0; border-radius: 3px 3px 0 0; }
    .cmdl { width: 61px; display: flex; align-items: center; gap: 10px; padding-left: 9px; box-sizing: border-box; }
    .cgrip { width: 1px; height: 18px; margin-right: -4px; background: repeating-linear-gradient(#ddd 0 2px, transparent 2px 3px); }
    .cmdi { flex: 1; background: #dcdcdc; border-radius: 2px; color: #7d7d7d; font: italic 13.5px/16px "DejaVu Sans Mono", monospace; display: flex; align-items: center; padding: 0 4px; }
    .cmdi > fit-text { margin-left: 8px; } .cmdi > svg:last-child { margin-left: auto; }
    .status { height: 32px; display: flex; border-top: 1px solid #4b515b; box-sizing: border-box; font-size: 12.5px; }
    .mtabs { width: 1007px; height: 19px; }
    .mt { height: 19px; display: flex; align-items: center; box-sizing: border-box; padding-bottom: 3px; background: #303846; color: #b3b7bd; font-size: 12px; }
    .m1 { width: 60px; padding-left: 13px; clip-path: path("M0 0H60Q58 19 53 19H8Q4 19 0 0Z"); }
    .m2 { width: 68px; padding-left: 12px; background: #3b4453; color: #fff; font-weight: 700; clip-path: path("M0 0H68Q64 3 62 12T56 19H12Q6 19 5 14T0 0Z"); }
    .m3 { width: 24px; justify-content: center; padding: 1px 0 0; clip-path: path("M5 2H24Q23 18 15 18H0Q1 3 5 2Z"); }
    .sb { background: #3b4453; height: 27px; margin-top: 1px; box-sizing: border-box; color: #f2f3f4; }
    .sb .row { height: 27px; } .sb.on { background: #5b8bc4; outline: 1px solid #7fa9d8; outline-offset: -1px; }
    .task { height: 34px; background: linear-gradient(90deg, #212321, #23301f 12%, #222722 20%, #222a21 35%, #222322 60%, #222321); color: #fff; }
    .task .row { height: 34px; } .task > .row > .cell { height: 34px; }
    .app { height: 34px; box-sizing: border-box; border-bottom: 2px solid #8fa3c8; display: flex; align-items: center; padding-top: 2px; }
    .a1 { width: 168px; padding-left: 6px; gap: 5px; } .a2 { width: 176px; background: #4e524e; padding-left: 9px; gap: 4px; }
    .pct { box-sizing: border-box; width: 54px; height: 22px; border: 3px solid #fff; background: #159947; display: flex; align-items: center; justify-content: center; font-size: 14px; }
    .nub { width: 2px; height: 10px; background: #fff; } .edgeline { width: 1px; height: 34px; background: #555; }
  `;

  private top() {
    return html`<header class="top"><div class="logo"><svg class="ic" width="28" height="31" viewBox="0 0 28 31">${A_logo}</svg></div>
      <div class="tops">${row(46, [N(55, "newf"), N(81, "open"), N(107, "save"), N(133, "saveas"), N(159, "mobo"), N(185, "mobs"), N(211, "print"), N(237, "undo"), cs(265), N(276, "redo"), cs(304), N(315, "qcust", 9, 12),
        T(623, 891, "Autodesk AutoCAD 2021 - STUDENT VERSION"), T(907, 993, "Exercise 4.dwg"),
        [1292, 5, html`<svg class="ic" width="5" height="9"><path class="cr" d="M0 0l5 4.500-5 4.500z"/></svg>`],
        [1303, 197, html`<div class="find"><fit-text .w=${133} .label=${"Type a keyword or phrase"}></fit-text></div>`],
        N(1505, "search"), N(1531, "user"), T(1554, 1590, "Sign In"), cs(1651), N(1666, "cart"), N(1691, "adapp"), cs(1717), [1731, 1, html`<div class="vsep"></div>`], N(1741, "help"), cs(1769),
        N(1846, "min", 14, 12), N(1873, "restore", 14), N(1901, "close", 14)], "title")}
      ${row(46, [...menus.map(([a, b, t]) => T(a, b, t)), N(1866, "min", 14, 14), N(1885, "restore", 14, 15), N(1905, "close", 14, 16)], "menu")}</div></header>
      ${row(0, [[4, 53, html`<div class="tab home"><fit-text .w=${33} .label=${"Home"}></fit-text></div>`], ...tabs.map(([a, b, t]) => T(a, b, t)),
        [606, 56, html`<div class="tab lay"><fit-text .w=${36} .label=${"Layout"}></fit-text></div>`],
        [686, 17, html`<div class="rbtn"><svg class="ic" width="6" height="4"><path fill="#333" d="M0 4h6L3 0z"/></svg></div>`], cs(710)], "tabs")}`;
  }

  private ribbon() {
    return html`<div class="ribbon">
      ${panel(2, 238, [big(25.500, "line", [["Line", 22]]), big(70, "polyline", [["Polyline", 42]]), big(121, "circle", [["Circle", 30]], true), big(170, "arc", [["Arc", 18]], true),
        col(197, 238, [[N(197, "rect"), cs(225)], [N(197, "ellipse"), cs(225)], [N(197, "hatch"), cs(225)]], "up")], [T(99, 126, "Draw"), cl(137.500)])}
      ${panel(239, 500, [col(246, 320, [[N(246, "move"), T(269, 299, "Move")], [N(246, "copy"), T(269, 297, "Copy")], [N(246, "stretch"), T(269, 306, "Stretch")]]),
        col(321, 390, [[N(321, "rotate"), T(344, 378, "Rotate")], [N(321, "mirror"), T(344, 377, "Mirror")], [N(321, "scale"), T(344, 371, "Scale")]]),
        col(393, 465, [[N(393, "trim"), T(416, 439, "Trim"), cs(453.500)], [N(393, "fillet"), T(416, 441, "Fillet"), cs(456)], [N(393, "array"), T(416, 444, "Array"), cs(456)]]),
        col(472, 492, [[N(472, "eraser")], [N(472, "cube")], [N(472, "offset")]])], [T(343, 380, "Modify"), cl(391.500)])}
      ${panel(501, 696, [big(526, "bigA", [["Text", 21]], true), big(580.500, "dimension", [["Dimension", 57]]),
        col(617, 696, [[N(617, "linear"), T(641, 672, "Linear"), cs(684)], [N(617, "leader"), T(641, 675, "Leader"), cs(687)], [N(617, "table"), T(641, 667, "Table")]], "up")], [T(561, 621, "Annotation"), cl(632.500)])}
      ${panel(697, 991, [big(728.500, "layers", [["Layer", 28], ["Properties", 53]]),
        col(759, 990, [
          [[759, 230, html`<div class="combo">${row(760, [N(762, "bulb"), N(782, "sun"), N(803, "vpfreeze"), N(823, "unlock"), [845, 16, html`<div class="sw"></div>`], T(866, 872, "0"), cl(982.500)])}</div>`]],
          [N(763, "lyOff"), N(789, "lyIso"), N(815, "lyFrz"), N(841, "lyLock"), N(867, "lyCur"), T(890, 962, "Make Current")],
          [N(763, "lyOn"), N(789, "lyUniso"), N(815, "lyThaw"), N(841, "lyUnlock"), N(867, "lyMatch"), T(890, 955, "Match Layer")]], "up")], [T(820, 853, "Layers"), cl(864.500)])}
      ${panel(992, 1160, [big(1016, "insert", [["Insert", 28]], true, "up"),
        col(1041, 1160, [[N(1041, "create"), T(1064, 1098, "Create")], [N(1041, "edit"), T(1064, 1084, "Edit")], [N(1041, "attrs"), T(1064, 1139, "Edit Attributes"), cs(1151)]], "up")], [T(1053, 1082, "Block"), cl(1093.500)])}
      ${panel(1161, 1446, [big(1193, "match", [["Match", 33], ["Properties", 53]]),
        col(1225, 1444, [
          [N(1225, "wheel"), [1245, 199, html`<div class="combo">${row(1246, [[1259, 18, html`<div class="sw k"></div>`], T(1288, 1329, "ByLayer"), cl(1437.500)])}</div>`]],
          [N(1225, "weights"), [1245, 199, html`<div class="combo">${row(1246, [[1249, 71, html`<div class="ln"></div>`], T(1322, 1363, "ByLayer"), cl(1437.500)])}</div>`]],
          [N(1225, "ltypes"), [1245, 199, html`<div class="combo">${row(1246, [[1249, 71, html`<div class="ln"></div>`], T(1322, 1363, "ByLayer"), cl(1437.500)])}</div>`]]], "props")],
        [T(1262, 1315, "Properties"), cl(1326.500), [1435, 6, this.launcher()]])}
      ${panel(1447, 1520, [big(1470.500, "group", [["Group", 33]]),
        col(1492, 1518, [[N(1496, "ungroup")], [N(1496, "groupedit")], [[1492, 25, html`<div class="sel">${ic("groupsel")}</div>`]]], "up")], [T(1457, 1495, "Groups"), cl(1506.500)])}
      ${panel(1521, 1622, [big(1557.500, "measure", [["Measure", 45]], true), col(1598, 1618, [[N(1598, "qselect")], [N(1598, "selall")], [N(1598, "calc")]], "up")], [T(1545, 1583, "Utilities"), cl(1594.500)])}
      ${panel(1623, 1707, [big(1651, "paste", [["Paste", 28]], true), col(1683, 1703, [[N(1683, "cut")], [N(1683, "copyclip")]], "up")], [T(1639, 1691, "Clipboard")])}
      ${panel(1708, 1919, [big(1740, "base", [["Base", 24]], true, "low")], [T(1713, 1738, "View"), cl(1749.500), [1761, 6, this.launcher()]])}
    </div>`;
  }

  private launcher() {
    return html`<svg class="ic" width="6" height="6"><path d="M0 0l5 5M5.500 1v4.500H1" class="g" stroke-width="1.300"/></svg>`;
  }

  private plus(c: string) {
    return html`<svg class="ic" width="9" height="9"><path stroke=${c} stroke-width="2" d="M4.500 0v9M0 4.500h9"/></svg>`;
  }

  private bars() {
    return html`
      ${row(0, [[13, 150, html`<div class="doc d1"><fit-text .w=${24} .label=${"Start"}></fit-text></div>`],
        [153, 152, html`<div class="doc d2"><fit-text .w=${56} .label=${"Exercise 4*"}></fit-text><svg class="ic" width="10" height="10"><path stroke="#9fa3a9" stroke-width="2" d="M0 0l10 10M10 0L0 10"/></svg></div>`],
        [303, 24, html`<div class="doc dp">${this.plus("#a5a8ae")}</div>`]], "docs")}
      <div class="bars">
        <div class="bar">
          <div class="tb">${row(2, [grip(3), N(14, "tt"), N(40, "from"), sep(65), N(72, "end"), N(98, "mid"), N(124, "int"), N(150, "app"), N(176, "ext"), sep(201), N(208, "cen"), N(234, "qua"), N(260, "tan"), sep(285), N(293, "per"), N(318, "par"), N(344, "ins"), N(370, "nod"), sep(395), N(403, "nea"), N(427, "non"), sep(453), N(459, "osn"), [479, 3, nothing]])}</div>
          <div class="tb">${row(483, [grip(486), N(497, "vpd"), N(523, "vps"), N(549, "vpp"), N(575, "vpo"), N(601, "vpc"), sep(625), [629, 109, html`<div class="vs"><fit-text .w=${67} .label=${`1/8" = 1'-0"`}></fit-text><svg class="ic" width="9" height="6"><path fill="none" stroke="#444" d="M.500.500l4 4 4-4"/></svg></div>`]])}</div>
        </div>
        <div class="bar">
          <div class="tb">${row(2, [grip(3), ...drawBar.map((n, i) => N(14 + i * 26, n)), [526, 3, nothing]])}</div>
          <div class="tb">${row(531, [grip(534), ...modBar.map((n, i) => N(545 + i * 26, n)), [1005, 3, nothing]])}</div>
        </div>
      </div>`;
  }

  private drawing() {
    return html`<svg class="sheet" width="1920" height="741" viewBox="0 273 1920 741">
      <rect x="456" y="326" width="853" height="657" fill="#7a7a7a"/><rect x="452" y="322" width="853" height="657" fill="#fff"/>
      <rect x="471.500" y="339.500" width="815" height="622" fill="none" stroke="#8c8c8c" stroke-dasharray="4 2"/>
      <rect x="487.500" y="355.500" width="775" height="582" fill="none" stroke="#000" stroke-width="11"/>
      <path d="M1023 849h236v5h-230.500v80h-5.500zM1028 872h230v3h-230zM1028 891.500h230v1.500h-230zM1028 909.800h230v1.400h-230z"/>
      <path class="ink" d="M806.500 429.500h400v181h-400z"/>
      ${[[854, 477], [1095, 477], [1158.7, 477], [854, 561], [1128.5, 563.6]].map(([x, y]) => ngon(x, y, 16.2, 17))}
      ${ngon(934.3, 474, 8.7, 13)}${ngon(1037, 576.7, 8.8, 13)}${ngon(986, 525.5, 42, 32)}
      ${ngon(540, 682.300, 17.200, 13)}${ngon(745.500, 888.300, 17.200, 13)}${ngon(643, 785, 83.700, 36)}
      ${[[955, 643, "32"], [611.5, 895.300, "16"]].map(([x, y, d]) => svg`<g text-anchor="middle" font-size="18.500"><text x=${x} y=${+y - 1.5}>3</text><text x=${x} y=${+y + 16.5}>${d}</text></g>
        <path d="M${+x - 10} ${y}h20" stroke="#000"/><text x=${+x + 10.500} y=${+y + 10.700} font-size="27">" = 1'</text>`)}
      ${dt(1032, 1253, 868.300, "Northern Virginia Community College")}
      ${dt(1032, 1071, 888.500, "Name:")}${dt(1079, 1172, 888.500, "John McDonald")}
      ${dt(1032, 1063, 906.500, "Date:")}${dt(1070, 1122, 906.500, "6/8/2020")}${dt(1134, 1171, 906.500, "Scale:")}${dt(1178, 1217, 906.500, "Varies")}
      ${dt(1032, 1124, 925.500, "Drawing Name:")}${dt(1135, 1223, 925.500, "Exercise No. 4")}
      <g fill="none" stroke="#0a46ff" stroke-width="1.200"><path d="M14.500 904.500V999.500H69.500ZM14.500 991.500h8v8"/></g>
      <g font-family="Lato" font-weight="300" fill="#0a46ff" font-size="20" text-anchor="middle"><text x="23.500" y="946.500" textLength="16" lengthAdjust="spacingAndGlyphs">Y</text><text x="51.500" y="998" textLength="16" lengthAdjust="spacingAndGlyphs">X</text></g>
      <path d="M160 650.500h44M211 650.500h44M207.500 602v45M207.500 654v44M204.500 647.500h6v6h-6z" fill="none" stroke="#6b6b6b"/>
    </svg>`;
  }

  private nav() {
    return html`<div class="nav"><svg class="ic" width="33" height="141" viewBox="0 -1 33 141">
      <g fill="none" stroke="#858585" stroke-width="1.500"><path d="M0 10.500h33M3 49.500h27" stroke="#b5b5b5" stroke-width="1"/>
      <path d="M15 40A10 10 0 0 1 13 21h9q3 0 3 3v12"/><circle cx="14" cy="31" r="6"/><circle cx="14" cy="31" r="3.500"/>
      <path d="M11 78L3 68q0-3 4-1l3 3-3-12q2-3 4 1l2 6V55q2-3 4 0v10l3-9q2-2 4 0l-2 10 3-6q3-2 3 1-1 13-5 17z"/>
      <path d="M4 86l16 16M20 86L4 101M4 90v-4h4M16 86h4v4M4 97v4h4"/><circle cx="22" cy="101" r="5.500" fill="#b5b5b5"/><path stroke-width="3" d="M26 105l4 4"/></g>
      <path fill="#858585" d="M13 118h7l-3.500 3z"/><circle cx="27" cy="4.500" r="4" fill="#858585"/><path stroke="#c5c5c5" d="M25 2.500l4 4M29 2.500l-4 4"/>
      <circle cx="27" cy="134" r="4" fill="#858585"/><path stroke="#a9a9a9" d="M25 133h4M25 135.500h4"/>
      <text x="17" y="43" font-family="Open Sans" font-weight="700" font-size="10" fill="#8290a2">2D</text></svg></div>`;
  }

  private command() {
    return html`<div class="cmd"><div class="cmdl"><div class="cgrip"></div>
      <svg class="ic" width="10" height="10"><path stroke="#e0e0e0" stroke-width="2" d="M.500.500l9 9M9.500.500l-9 9"/></svg>
      <svg class="ic" width="17" height="17" viewBox="0 0 17 17"><path d="M1.500 15.500L10 7" stroke="#d8d8d8" stroke-width="3" stroke-linecap="round"/><path fill="none" stroke="#d8d8d8" stroke-width="2.500" d="M13 1.500A4 4 0 1 0 16 6"/></svg></div>
      <div class="cmdi"><svg class="ic" width="29" height="14" viewBox="0 0 29 14"><path fill="none" stroke="#777" d="M.500.500h17v13H.500z"/><path fill="#777" d="M0 0h18v4H0zM20 5h9l-4.500 5z"/><path fill="none" stroke="#777" d="M2 6l3 2-3 2M6 10.500h4"/></svg>
      <fit-text .w=${112} .label=${"Type a command"}></fit-text><svg class="ic" width="9" height="5"><path fill="#6a6a6a" d="M0 5h8L4 0z"/></svg></div></div>`;
  }

  private bottom() {
    let end = 1007;
    return html`<div class="status"><div class="mtabs">${row(0, [
      [12, 60, html`<div class="mt m1"><fit-text .w=${34} .label=${"Model"}></fit-text></div>`],
      [73, 68, html`<div class="mt m2"><fit-text .w=${43} .label=${"Layout1"}></fit-text></div>`],
      [148, 24, html`<div class="mt m3">${this.plus("#a5a8ae")}</div>`]])}</div>
      ${status.map(([a, b, items, cls]) => {
        const m = a - end;
        end = b;
        return html`<div class="sb ${cls ?? ""}" style="margin-left:${m}px;width:${b - a}px">${row(a, items)}</div>`;
      })}</div>
    <footer class="task">${row(0, [N(12, "win", 17, 18), N(50, "tsearch", 20), N(90, "cortana", 20), N(130, "tview", 20), N(174, "folder", 17),
      [208, 168, html`<div class="app a1">${ic("edge", 16)}<fit-text .w=${134} .label=${"Created by Camtasia ..."}></fit-text></div>`],
      [381, 176, html`<div class="app a2">${ic("acad", 18)}<fit-text .w=${130} .label=${"Autodesk AutoCAD 2..."}></fit-text></div>`],
      [1580, 54, html`<div class="pct"><fit-text .w=${35} .label=${"100%"}></fit-text></div>`], [1634, 2, html`<div class="nub"></div>`],
      N(1641, "plug", 13, 16), N(1665, "chev", 13, 10), N(1690, "batt", 17, 13), N(1720, "wifi", 12), N(1743, "dropbox", 16, 14), N(1771, "vol", 17, 13), T(1804, 1851, "1:56 PM"), N(1875, "notif"), [1915, 1, html`<div class="edgeline"></div>`]])}</footer>`;
  }

  render() {
    return html`${this.top()}${this.ribbon()}${this.bars()}
      <main class="canvas">${this.drawing()}${this.nav()}${this.command()}</main>${this.bottom()}`;
  }
}
